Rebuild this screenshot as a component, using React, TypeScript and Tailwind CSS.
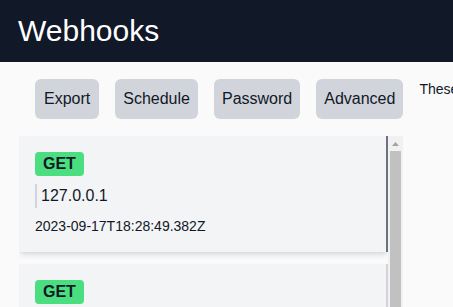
import React from "react";

const items = [
  { method: "GET", ip: "127.0.0.1", ts: "2023-09-17T18:28:49.382Z", active: true },
  { method: "GET", ip: "127.0.0.1", ts: "2023-09-17T18:27:12.104Z", active: false },
  { method: "GET", ip: "127.0.0.1", ts: "2023-09-17T18:25:03.913Z", active: false },
  { method: "GET", ip: "127.0.0.1", ts: "2023-09-17T18:21:44.527Z", active: false },
];

export default function App() {
  return (
    <div
      className="h-screen overflow-hidden bg-[#fafafa] flex flex-col"
      style={{ fontFamily: '"Liberation Sans", Arial, sans-serif' }}
    >
      <header className="bg-[#111827] h-[62px] shrink-0 flex items-center px-[18px]">
        <h1 className="text-white text-[30px] leading-9">Webhooks</h1>
      </header>
      <main className="flex-1 min-h-0 flex flex-col pl-[19px] pt-[17px]">
        <div className="flex items-start gap-4 pl-4 whitespace-nowrap">
          <button className="bg-[#d1d5db] rounded-md px-[9px] py-2 text-base leading-6 text-[#111827]">Export</button>
          <button className="bg-[#d1d5db] rounded-md px-2 py-2 text-base leading-6 text-[#111827]">Schedule</button>
          <button className="bg-[#d1d5db] rounded-md px-2 py-2 text-base leading-6 text-[#111827]">Password</button>
          <button className="bg-[#d1d5db] rounded-md px-2 py-2 text-base leading-6 text-[#111827]">Advanced</button>
          <p className="text-sm leading-5 text-[#111827]">These are the most recent requests received by your webhook endpoint.</p>
        </div>
        <div className="mt-[17px] w-96 h-[300px] shrink-0 flex">
          <div className="flex-1 min-w-0 overflow-hidden flex flex-col gap-3">
            {items.map((it, i) => (
              <div
                key={i}
                className={`shrink-0 bg-[#f3f4f6] p-4 shadow-md border-r-2 ${it.active ? "border-[#6b7280]" : "border-[#d1d5db]"}`}
              >
                <span className="inline-block bg-[#4ade80] text-[#111827] font-bold text-base leading-6 px-2 rounded-sm">
                  {it.method}
                </span>
                <div className="mt-2 border-l-2 border-[#d1d5db] pl-1 text-base leading-6 text-[#111827]">{it.ip}</div>
                <div className="mt-2 text-sm leading-5 text-[#111827]">{it.ts}</div>
              </div>
            ))}
          </div>
          <div className="w-[15px] shrink-0 bg-[#f1f1f1] flex flex-col items-center">
            <div className="h-[15px] w-full flex items-center justify-center">
              <svg width="7" height="4" viewBox="0 0 7 4">
                <path d="M0 4 L3.5 0 L7 4 Z" fill="#a3a3a3" />
              </svg>
            </div>
            <div className="w-[11px] flex-1 bg-[#c1c1c1] mb-[40px]" />
          </div>
        </div>
      </main>
    </div>
  );
}
